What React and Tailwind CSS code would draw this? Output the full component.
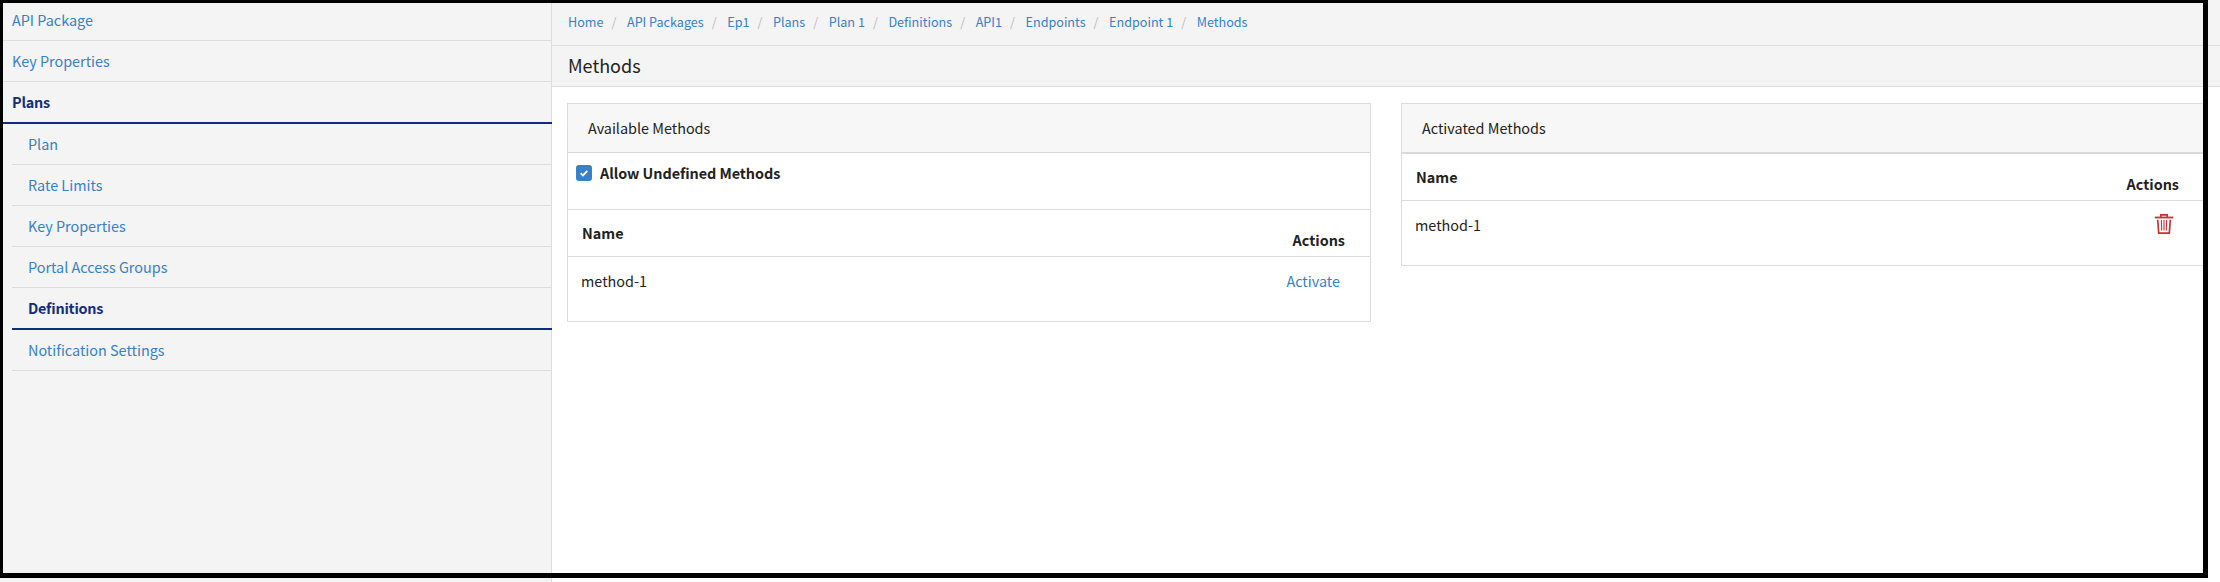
const crumbs = ["Home", "API Packages", "Ep1", "Plans", "Plan 1", "Definitions", "API1", "Endpoints", "Endpoint 1", "Methods"];
const planLinks = ["Plan", "Rate Limits", "Key Properties", "Portal Access Groups", "Definitions", "Notification Settings"];

function NavItem({ label, active, nested }) {
  return (
    <li
      className={
        "flex items-center whitespace-nowrap " +
        (nested ? "ml-3 pl-4 " : "pl-3 ") +
        (active
          ? "relative z-10 -mr-px h-[42px] border-b-2 border-[#112c7a] font-bold tracking-[-0.22px] text-[#142e7b]"
          : "h-[41px] border-b border-[#dcdcdc] text-[#3880c8]")
      }
    >
      {label}
    </li>
  );
}

function TrashIcon() {
  return (
    <svg width="20" height="22" viewBox="0 0 20 22" fill="none" stroke="#c8322b">
      <path d="M.8 4.5h18.4" strokeWidth="1.8" />
      <path d="M6.8 4V1.9h6.4V4" strokeWidth="1.6" />
      <path d="M3.7 6.8l1 13.4h10.6l1-13.4" strokeWidth="1.7" />
      <path d="M7.4 7l.3 10.5M10 7v10.5M12.6 7l-.3 10.5" strokeWidth="1.1" />
    </svg>
  );
}

function MethodTable({ action }) {
  return (
    <div>
      <div className="flex h-[47px] justify-between border-b border-[#dcdcdc] pr-[25px] pl-3.5 font-bold">
        <span className="pt-[11px]">Name</span>
        <span className="pt-[18px]">Actions</span>
      </div>
      <div className="flex h-[64px] justify-between pl-[13px]">
        <span className="pt-3">method-1</span>
        {action}
      </div>
    </div>
  );
}

export default function App() {
  return (
    <div className="relative flex h-[582px] w-[2220px] overflow-hidden bg-white font-['Noto_Sans_CJK_SC',sans-serif] text-[14.4px] leading-6 text-[#222]">
      <nav className="w-[552px] shrink-0 border-r border-[#dcdcdc] bg-[#f4f4f4]">
        <ul>
          <NavItem label="API Package" />
          <NavItem label="Key Properties" />
          <NavItem label="Plans" active />
          {planLinks.map((l) => (
            <NavItem key={l} label={l} nested active={l === "Definitions"} />
          ))}
        </ul>
      </nav>
      <main className="flex-1">
        <ol className="flex h-[46px] items-center border-b border-[#dcdcdc] bg-[#f4f4f4] pb-0.5 pl-4 text-[12.6px] whitespace-nowrap text-[#3880c8]">
          {crumbs.map((c, i) => (
            <li key={c} className="flex">
              {i > 0 && <span className="pr-[10.6px] pl-2 text-[#bbb]">/</span>}
              {c}
            </li>
          ))}
        </ol>
        <h1 className="flex h-[41px] items-center border-b border-[#dcdcdc] bg-[#f4f4f4] pb-0.5 pl-4 text-[18px]">Methods</h1>
        <div className="flex items-start gap-[30px] pt-4 pl-[15px]">
          <section className="w-[804px] border border-[#dcdcdc]">
            <h2 className="flex h-[49px] items-center border-b border-[#d8d8d8] bg-[#f7f7f7] pl-5">Available Methods</h2>
            <label className="flex h-[57px] items-start border-b border-[#dcdcdc] pt-2 pl-2 font-bold tracking-[-0.05px]">
              <span className="mt-1 mr-2 flex size-4 items-center justify-center rounded-[3px] bg-[#3880c8]">
                <svg width="8" height="7" viewBox="0 0 8 7" fill="none" stroke="white" strokeWidth="1.8">
                  <path d="M.7 3.2l2.2 2.3L7.3 1" />
                </svg>
              </span>
              Allow Undefined Methods
            </label>
            <MethodTable action={<a className="pt-3 pr-[30px] text-[#3880c8]">Activate</a>} />
          </section>
          <section className="w-[804px] border border-[#dcdcdc]">
            <h2 className="flex h-[50px] items-center border-b-2 border-[#dadada] bg-[#f7f7f7] pl-5">Activated Methods</h2>
            <MethodTable action={<span className="pt-3 pr-[30px]"><TrashIcon /></span>} />
          </section>
        </div>
      </main>
      <div className="pointer-events-none absolute top-0 left-0 z-20 h-[578px] w-[2208px] border-t-3 border-r-5 border-b-5 border-l-3 border-black" />
    </div>
  );
}
